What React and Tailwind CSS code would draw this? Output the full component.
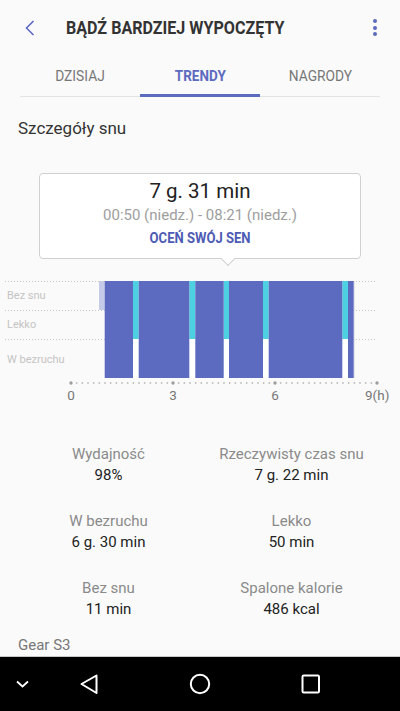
import React from "react";

const font = { fontFamily: "Roboto, 'Noto Sans', sans-serif" };

function Chart() {
  const dark = [
    [104.7, 133],
    [138.7, 189.3],
    [195.3, 223.7],
    [229, 263],
    [268.7, 342.3],
    [348, 353.7],
  ];
  const cyan = [
    [133, 138.7],
    [189.3, 195.3],
    [223.7, 229],
    [263, 268.7],
    [342.3, 348],
  ];
  const top = 6;
  const mid1 = 35;
  const mid2 = 64;
  const bottom = 103;
  const axisY = 108;
  const minorDots = [];
  for (let i = 0; i <= 54; i++) {
    const x = 71 + (i * 34) / 6;
    if (i % 18 !== 0) minorDots.push(x);
  }
  return (
    <div className="relative h-[130px] w-[400px]">
      <svg width="400" height="130" className="absolute left-0 top-0">
        {[top, mid1, mid2].map((y) => (
          <line
            key={y}
            x1="5"
            x2="377"
            y1={y + 0.5}
            y2={y + 0.5}
            stroke="#c8c8c8"
            strokeWidth="1"
            strokeDasharray="1 2"
          />
        ))}
        <rect x="99" y={top} width="5.7" height={mid1 - top} fill="#c5cae9" />
        {cyan.map(([a, b], i) => (
          <g key={i}>
            <rect x={a} y={top} width={b - a} height={mid2 - top} fill="#4dd0e1" />
            <rect x={a} y={mid2} width={b - a} height={bottom - mid2} fill="#ffffff" />
          </g>
        ))}
        {dark.map(([a, b], i) => (
          <rect key={i} x={a} y={top} width={b - a} height={bottom - top} fill="#5c6bc0" />
        ))}
        <line x1="354.5" x2="354.5" y1={top} y2={bottom} stroke="#e6e6e6" strokeWidth="1" />
        {minorDots.map((x, i) => (
          <circle key={i} cx={x} cy={axisY} r="0.9" fill="#bdbdbd" />
        ))}
        {[71, 173, 275, 377].map((x) => (
          <circle key={x} cx={x} cy={axisY} r="1.7" fill="#9e9e9e" />
        ))}
      </svg>
      <div className="absolute left-[7px] top-[14px] text-[11px] leading-[13px] text-[#c4c4c4]">Bez snu</div>
      <div className="absolute left-[7px] top-[43px] text-[11px] leading-[13px] text-[#c4c4c4]">Lekko</div>
      <div className="absolute left-[7px] top-[78px] text-[11px] leading-[13px] text-[#c4c4c4]">W bezruchu</div>
      <div className="absolute left-[61px] top-[112px] flex w-[20px] justify-center text-[13.5px] leading-[16px] text-[#777]">0</div>
      <div className="absolute left-[163px] top-[112px] flex w-[20px] justify-center text-[13.5px] leading-[16px] text-[#777]">3</div>
      <div className="absolute left-[265px] top-[112px] flex w-[20px] justify-center text-[13.5px] leading-[16px] text-[#777]">6</div>
      <div className="absolute left-[365px] top-[112px] text-[13.5px] leading-[16px] text-[#777]">9(h)</div>
    </div>
  );
}

function Stat({ label, value }) {
  return (
    <div className="flex flex-col items-center">
      <div className="text-[15px] leading-[21px] text-[#8a8a8a]">{label}</div>
      <div className="text-[15px] leading-[21px] text-[#222]">{value}</div>
    </div>
  );
}

export default function App() {
  return (
    <div style={font} className="relative flex h-[711px] w-[400px] flex-col overflow-hidden bg-[#fafafa]">
      {/* Header */}
      <div className="flex h-[55px] shrink-0 items-center">
        <div className="flex w-[66px] justify-center">
          <svg width="14" height="18" viewBox="0 0 14 18" className="ml-[-6px]">
            <path d="M10.5 2 L3.5 9 L10.5 16" fill="none" stroke="#5c6bc0" strokeWidth="1.6" />
          </svg>
        </div>
        <div className="flex-1">
          <div className="origin-left scale-x-[0.92] whitespace-nowrap text-[17.5px] font-bold leading-[22px] text-[#333]">
            BĄDŹ BARDZIEJ WYPOCZĘTY
          </div>
        </div>
        <div className="mr-[23px] flex flex-col gap-[2.6px]">
          <div className="h-[4px] w-[4px] rounded-full bg-[#5c6bc0]" />
          <div className="h-[4px] w-[4px] rounded-full bg-[#5c6bc0]" />
          <div className="h-[4px] w-[4px] rounded-full bg-[#5c6bc0]" />
        </div>
      </div>

      {/* Tabs */}
      <div className="relative mx-[20px] flex h-[42px] shrink-0 border-b border-[#e3e3e3]">
        <div className="flex flex-1 items-center justify-center pt-[1px] text-[15px] text-[#777]">
          <span className="scale-x-[0.92]">DZISIAJ</span>
        </div>
        <div className="relative flex flex-1 items-center justify-center pt-[1px] text-[15px] font-bold text-[#5c6bc0]">
          <span className="scale-x-[0.9]">TRENDY</span>
          <div className="absolute bottom-[-1px] left-0 right-0 h-[3px] bg-[#5c6bc0]" />
        </div>
        <div className="flex flex-1 items-center justify-center pt-[1px] text-[15px] text-[#777]">
          <span className="scale-x-[0.92]">NAGRODY</span>
        </div>
      </div>

      {/* Section title */}
      <div className="shrink-0 px-[18px] pt-[20px] text-[17px] leading-[22px] text-[#333]">Szczegóły snu</div>

      {/* Tooltip card */}
      <div className="relative mx-[39px] mt-[34px] flex h-[86px] shrink-0 flex-col items-center rounded-[4px] border border-[#d0d0d0] bg-white">
        <div className="mt-[4px] text-[20.5px] leading-[26px] text-[#222]">7 g. 31 min</div>
        <div className="mt-[1px] text-[15px] leading-[20px] text-[#9e9e9e]">00:50 (niedz.) - 08:21 (niedz.)</div>
        <div className="mt-[5px] scale-x-[0.9] text-[14.5px] font-bold leading-[18px] text-[#4e5bb5]">OCEŃ SWÓJ SEN</div>
        <div className="absolute bottom-[-6px] left-[183px] h-[10px] w-[10px] rotate-45 border-b border-r border-[#d0d0d0] bg-white" />
      </div>

      {/* Chart */}
      <div className="mt-[16px] shrink-0">
        <Chart />
      </div>

      {/* Stats */}
      <div className="mt-[39px] grid shrink-0 grid-cols-2 gap-y-[25px] px-[17px]">
        <Stat label="Wydajność" value="98%" />
        <Stat label="Rzeczywisty czas snu" value="7 g. 22 min" />
        <Stat label="W bezruchu" value="6 g. 30 min" />
        <Stat label="Lekko" value="50 min" />
        <Stat label="Bez snu" value="11 min" />
        <Stat label="Spalone kalorie" value="486 kcal" />
      </div>

      <div className="mt-[15px] shrink-0 px-[18px] text-[15px] leading-[20px] text-[#777]">Gear S3</div>

      {/* Nav bar */}
      <div className="absolute bottom-0 left-0 right-0 flex h-[55px] items-center border-t border-[#c8c8c8] bg-black">
        <svg width="400" height="54" viewBox="0 0 400 54">
          <path d="M17 24.5 L22.5 29.5 L28 24.5" fill="none" stroke="#fff" strokeWidth="1.8" />
          <path d="M96.5 18.5 L81.5 27 L96.5 36 Z" fill="none" stroke="#fff" strokeWidth="2" strokeLinejoin="round" />
          <circle cx="200" cy="27" r="9.2" fill="none" stroke="#fff" strokeWidth="2" />
          <rect x="302.5" y="18.5" width="16.5" height="17" rx="1.2" fill="none" stroke="#fff" strokeWidth="2" />
        </svg>
      </div>
    </div>
  );
}
